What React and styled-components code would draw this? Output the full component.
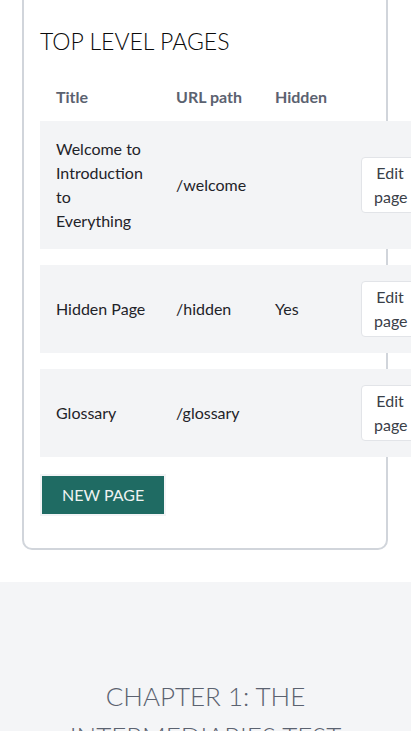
import React from 'react';
import styled, { createGlobalStyle } from 'styled-components';

const GlobalStyle = createGlobalStyle`
  html, body {
    margin: 0;
    padding: 0;
    overflow-x: hidden;
    background: #fff;
  }
  body {
    font-family: Lato, "Liberation Sans", sans-serif;
    color: #111827;
  }
`;

const Page = styled.div`
  display: flex;
  flex-direction: column;
  width: 411px;
`;

const CardWrap = styled.div`
  padding: 0 23px 32px 22px;
`;

const Card = styled.section`
  margin-top: -21px;
  padding: 44px 16px 32px;
  border: 2px solid #d1d5db;
  border-radius: 10px;
`;

const Heading = styled.h2`
  margin: 0 0 16px;
  font-family: Lato, "Liberation Sans", sans-serif;
  font-weight: 300;
  font-size: 23px;
  line-height: 32px;
  text-transform: uppercase;
  color: #0a0a0a;
`;

const Table = styled.div`
  display: flex;
  flex-direction: column;
  gap: 16px;
  width: 400px;
`;

const Row = styled.div`
  display: grid;
  grid-template-columns: 120px 99px 86px 1fr;
  align-items: center;
  min-height: ${({ head }) => (head ? '48px' : 'auto')};
  padding: ${({ head }) => (head ? '0' : '16px 0')};
  background: ${({ head }) => (head ? 'transparent' : '#f3f4f6')};
  margin-bottom: ${({ head }) => (head ? '-16px' : '0')};
`;

const Cell = styled.div`
  padding: 0 10px 0 16px;
  font-size: 16px;
  line-height: 24px;
  font-weight: ${({ head }) => (head ? 700 : 400)};
  color: ${({ head }) => (head ? '#5b6270' : '#1f2329')};
`;

const EditButton = styled.button`
  width: 58px;
  padding: 3px 12px;
  border: 1px solid #e2e4e8;
  border-radius: 4px;
  background: #fff;
  font-family: Lato, "Liberation Sans", sans-serif;
  font-size: 16px;
  line-height: 24px;
  color: #3a4048;
  text-align: center;
`;

const NewButton = styled.button`
  margin-top: 17px;
  align-self: flex-start;
  padding: 7px 20px;
  border: 2px solid #f3f4f6;
  background: #1f6b63;
  background-clip: padding-box;
  color: #eef3f2;
  font-family: Lato, "Liberation Sans", sans-serif;
  font-size: 16px;
  line-height: 24px;
  text-transform: uppercase;
`;

const Body = styled.div`
  display: flex;
  flex-direction: column;
`;

const Chapter = styled.section`
  background: #f4f5f7;
  padding: 94px 24px 40px;
  text-align: center;
`;

const ChapterTitle = styled.h2`
  margin: 0;
  font-family: Lato, "Liberation Sans", sans-serif;
  font-weight: 300;
  font-size: 26px;
  line-height: 40px;
  text-transform: uppercase;
  color: #5b6270;
`;

const pages = [
  { title: 'Welcome to Introduction to Everything', path: '/welcome', hidden: '' },
  { title: 'Hidden Page', path: '/hidden', hidden: 'Yes' },
  { title: 'Glossary', path: '/glossary', hidden: '' },
];

function App() {
  return (
    <Page>
      <GlobalStyle />
      <CardWrap>
        <Card>
          <Heading>Top level pages</Heading>
          <Body>
            <Table>
              <Row head>
                <Cell head>Title</Cell>
                <Cell head>URL path</Cell>
                <Cell head>Hidden</Cell>
                <Cell head />
              </Row>
              {pages.map(p => (
                <Row key={p.path}>
                  <Cell>{p.title}</Cell>
                  <Cell>{p.path}</Cell>
                  <Cell>{p.hidden}</Cell>
                  <Cell>
                    <EditButton>Edit page</EditButton>
                  </Cell>
                </Row>
              ))}
            </Table>
            <NewButton>New page</NewButton>
          </Body>
        </Card>
      </CardWrap>
      <Chapter>
        <ChapterTitle>Chapter 1: The Intermediaries Test</ChapterTitle>
      </Chapter>
    </Page>
  );
}

export default App;
